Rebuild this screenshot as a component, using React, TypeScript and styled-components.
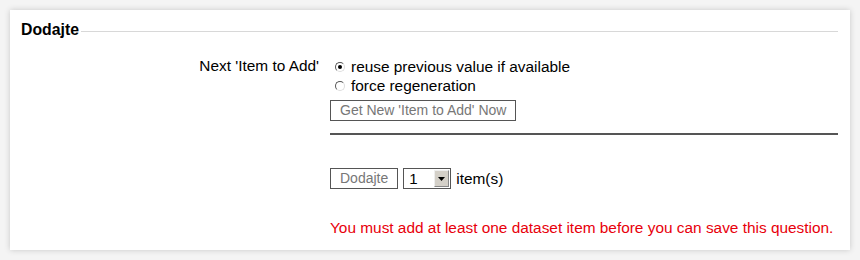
import styled, { createGlobalStyle } from 'styled-components';

const GlobalStyle = createGlobalStyle`
  html, body {
    margin: 0;
    padding: 0;
    background: #ffffff;
  }
  body {
    font-family: 'Liberation Sans', Arial, sans-serif;
    font-size: 15.4px;
    color: #000;
  }
`;

const Page = styled.div`
  width: 860px;
  height: 260px;
  padding: 10px;
  box-sizing: border-box;
  background: #f4f4f4;
`;

const Card = styled.div`
  height: 240px;
  background: #fff;
  box-shadow: 0 0 6px rgba(0, 0, 0, 0.18);
  padding: 11px 12px 0 11px;
  box-sizing: border-box;
`;

const Legend = styled.div`
  display: flex;
  align-items: center;
  gap: 2px;
  height: 18px;
`;

const LegendTitle = styled.span`
  font-weight: bold;
  font-size: 15.8px;
`;

const LegendRule = styled.div`
  flex: 1;
  height: 1px;
  background: #d8d8d8;
  margin-top: 2px;
`;

const FormRow = styled.div<{ $top: number }>`
  display: grid;
  grid-template-columns: 298px 1fr;
  column-gap: 11px;
  margin-top: ${(p) => p.$top}px;
`;

const Label = styled.div`
  text-align: right;
  font-size: 15.4px;
  line-height: 18px;
`;

const Field = styled.div`
  display: flex;
  flex-direction: column;
  align-items: flex-start;
`;

const RadioLine = styled.label`
  display: flex;
  align-items: center;
  font-size: 15.4px;
  line-height: 19px;
  height: 19px;
`;

const Radio = styled.span<{ $on?: boolean }>`
  width: 8px;
  height: 8px;
  border: 1px solid #7a7a7a;
  border-top-color: #555;
  border-left-color: #555;
  border-right-color: #ddd;
  border-bottom-color: #ddd;
  border-radius: 50%;
  margin: 0 6px 0 5px;
  position: relative;
  background: #fff;
  &::after {
    content: '';
    display: ${(p) => (p.$on ? 'block' : 'none')};
    position: absolute;
    left: 2px;
    top: 2px;
    width: 4px;
    height: 4px;
    border-radius: 50%;
    background: #000;
  }
`;

const Spacer = styled.div<{ $h: number }>`
  height: ${(p) => p.$h}px;
`;

const Button = styled.button`
  font-family: 'Liberation Sans', Arial, sans-serif;
  font-size: 14px;
  color: #777;
  background: #fff;
  border: 1px solid #555;
  height: 21px;
  padding: 0 9px;
  line-height: 19px;
`;

const Rule = styled.div`
  height: 2px;
  width: 100%;
  background: #555;
  margin-top: 12px;
`;

const AddLine = styled.div`
  display: flex;
  align-items: center;
  gap: 5px;
`;

const Select = styled.div`
  display: flex;
  align-items: center;
  width: 48px;
  height: 21px;
  box-sizing: border-box;
  border: 1px solid #555;
  justify-content: space-between;
  padding-left: 5px;
  font-size: 15px;
`;

const Arrow = styled.span`
  width: 15px;
  height: 17px;
  background: #d4d0c8;
  border: 1px solid #888;
  border-top-color: #eee;
  border-left-color: #eee;
  box-sizing: border-box;
  display: flex;
  align-items: center;
  justify-content: center;
  margin-right: 1px;
`;

const Items = styled.span`
  font-size: 15.4px;
`;

const Error = styled.div`
  color: #e8000b;
  font-size: 15.4px;
`;

export default function App() {
  return (
    <>
      <GlobalStyle />
      <Page>
        <Card>
          <Legend>
            <LegendTitle>Dodajte</LegendTitle>
            <LegendRule />
          </Legend>
          <FormRow $top={18}>
            <Label>Next 'Item to Add'</Label>
            <Field>
              <RadioLine>
                <Radio $on />
                reuse previous value if available
              </RadioLine>
              <RadioLine>
                <Radio />
                force regeneration
              </RadioLine>
              <Spacer $h={5} />
              <Button>Get New 'Item to Add' Now</Button>
              <Rule />
            </Field>
          </FormRow>
          <FormRow $top={33}>
            <div />
            <Field>
              <AddLine>
                <Button>Dodajte</Button>
                <Select>
                  1
                  <Arrow>
                    <svg width="7" height="4" viewBox="0 0 7 4">
                      <path d="M0 0h7L3.5 4z" fill="#000" />
                    </svg>
                  </Arrow>
                </Select>
                <Items>item(s)</Items>
              </AddLine>
            </Field>
          </FormRow>
          <FormRow $top={30}>
            <div />
            <Error>You must add at least one dataset item before you can save this question.</Error>
          </FormRow>
        </Card>
      </Page>
    </>
  );
}
